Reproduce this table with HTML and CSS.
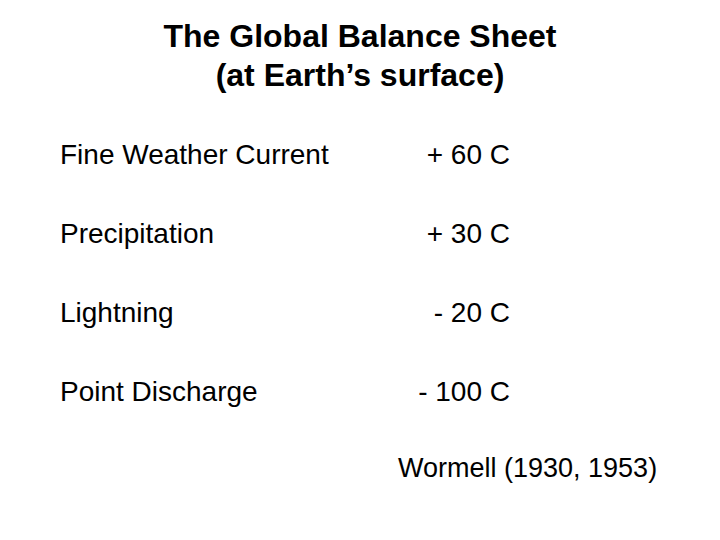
FILE: index.html
```html
<!DOCTYPE html>
<html lang="en">
<head>
    <meta charset="utf-8">
    <title>The Global Balance Sheet</title>
    <link rel="stylesheet" href="styles.css">
</head>
<body>
    <div class="slide">
        <h1 class="title">The Global Balance Sheet<br>(at Earth’s surface)</h1>
        <div class="sheet">
            <div class="label">Fine Weather Current</div>
            <div class="value">+ 60 C</div>
            <div class="label">Precipitation</div>
            <div class="value">+ 30 C</div>
            <div class="label">Lightning</div>
            <div class="value">- 20 C</div>
            <div class="label">Point Discharge</div>
            <div class="value">- 100 C</div>
        </div>
        <p class="cite">Wormell (1930, 1953)</p>
    </div>
</body>
</html>
```

FILE: styles.css
```css
* {
    margin: 0;
    padding: 0;
}
body {
    background: #fff;
    color: #000;
    font-family: "Liberation Sans", Arial, sans-serif;
}
.slide {
    width: 720px;
    height: 540px;
    overflow: hidden;
}
.title {
    font-size: 32px;
    font-weight: bold;
    line-height: 39px;
    text-align: center;
    padding-top: 17px;
}
.sheet {
    display: grid;
    grid-template-columns: 1fr auto;
    grid-auto-rows: 79px;
    align-items: center;
    width: 450px;
    margin: 20px 0 0 60px;
    font-size: 28px;
}
.value {
    text-align: right;
}
.cite {
    font-size: 27px;
    line-height: 32px;
    margin: 21px 0 0 398px;
}
```
